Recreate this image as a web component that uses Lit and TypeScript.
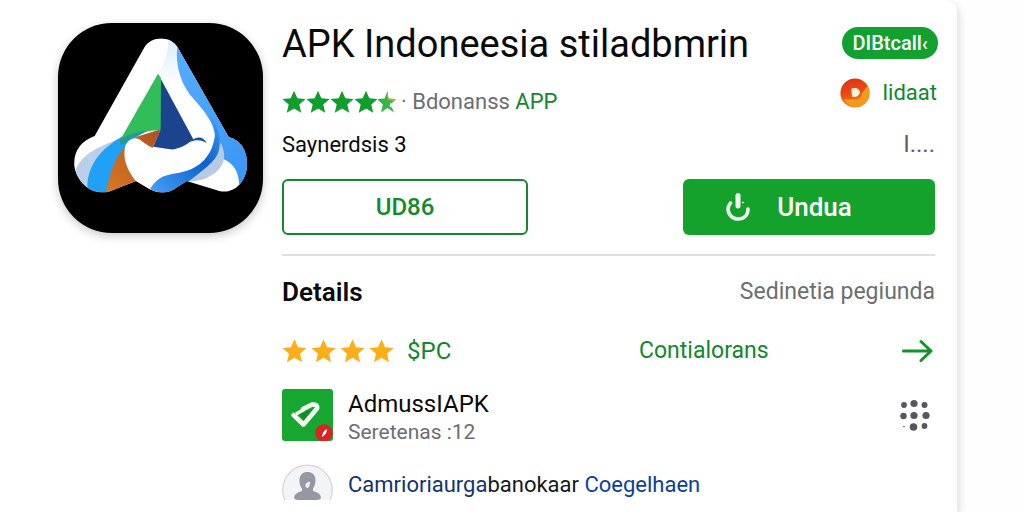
import { LitElement, html, css, svg } from "lit";
import { customElement } from "lit/decorators.js";

const STAR = "M12 1.2l3.2 7.3 7.9.7-6 5.3 1.8 7.8-6.9-4.1-6.9 4.1 1.8-7.8-6-5.3 7.9-.7z";

@customElement("app-logo")
class AppLogo extends LitElement {
  static styles = css`
    :host { display: block; }
    .tile {
      display: block;
      width: 205px;
      height: 210px;
      border-radius: 54px;
      background: #000;
      box-shadow: 0 3px 10px rgba(0, 0, 0, 0.22);
    }
  `;
  render() {
    return html`<svg class="tile" viewBox="55 67 613 630" role="img" aria-label="App logo">
      <defs>
        <linearGradient id="edge" x1="0" y1="0" x2="0.6" y2="1">
          <stop offset="0" stop-color="#58adff" /><stop offset="1" stop-color="#3b97f5" />
        </linearGradient>
        <linearGradient id="wave" x1="0" y1="1" x2="1" y2="0">
          <stop offset="0" stop-color="#4aa2fa" /><stop offset="0.6" stop-color="#0b62cc" /><stop offset="1" stop-color="#3f9af6" />
        </linearGradient>
        <linearGradient id="rust" x1="0" y1="1" x2="1" y2="0">
          <stop offset="0" stop-color="#d97a25" /><stop offset="1" stop-color="#b2501f" />
        </linearGradient>
        <linearGradient id="fold" x1="0" y1="0" x2="0" y2="1">
          <stop offset="0" stop-color="#dcebfa" /><stop offset="1" stop-color="#fff" />
        </linearGradient>
        <clipPath id="body">
          <path d="M312 142C334 104 392 104 414 142L566 409C606 418 624 458 621 498C616 548 580 580 538 571L440 541L398 568Q366 584 330 566L288 541L206 573C158 584 112 550 103 496C100 452 122 422 164 406Z" />
        </clipPath>
      </defs>
      <g clip-path="url(#body)">
        <rect x="95" y="105" width="535" height="480" fill="#fff" />
        <path d="M384 112C388 180 356 200 358 222L420 260C416 210 400 170 412 130Z" fill="url(#fold)" />
        <path d="M412 134C404 190 422 246 450 282C496 334 534 376 524 432L548 474C586 490 604 520 596 590H640V380L420 120Z" fill="url(#edge)" />
        <path d="M104 520C120 452 190 436 250 408L232 450L140 560Z" fill="#b9cfea" />
        <path d="M142 560C142 490 188 440 246 408L292 404C250 440 214 510 204 585H150Z" fill="#20a1f5" />
        <path d="M196 590C206 520 226 450 290 408L362 386L340 438L300 545Z" fill="url(#rust)" />
        <path d="M354 219L363 232V388Q304 390 244 412Z" fill="#31bd59" />
        <path d="M240 414Q284 390 326 390Q290 404 264 428L240 432Z" fill="#239c97" />
        <path d="M363 236L460 416L420 450L340 438L362 386Z" fill="#1c438e" />
        <path d="M538 420C556 448 556 476 544 496C522 530 480 542 448 542L440 520Z" fill="#b7c9e4" />
        <path d="M254 446C258 416 284 404 304 420C354 462 410 454 456 420L484 412L528 424C530 470 500 508 440 528L330 590L288 542C262 508 250 480 254 446Z" fill="#fff" />
        <path d="M328 572C346 530 380 522 410 518C474 508 514 472 524 410C528 388 520 366 508 344C544 390 548 440 526 472C498 510 450 530 404 584H330Z" fill="url(#wave)" />
      </g>
      <path d="M456 418C472 406 492 408 500 428C486 418 470 416 450 424Z" fill="#14509c" />
    </svg>`;
  }
}

@customElement("star-rating")
class StarRating extends LitElement {
  static properties = {
    full: { type: Number },
    half: { type: Boolean },
    gold: { type: Boolean },
  };
  declare full: number;
  declare half: boolean;
  declare gold: boolean;
  static styles = css`
    :host { display: block; }
    .stars { display: flex; color: #0f9d2c; }
    .gold { gap: 4px; color: #fbae17; }
    .star { display: block; width: 24px; height: 24px; }
    .gold .star { width: 25px; height: 26px; }
    .part { display: block; width: 18px; height: 24px; }
  `;
  render() {
    return html`<div class="stars ${this.gold ? "gold" : ""}" role="img" aria-label="Rating">
      ${Array.from({ length: this.full }, () => html`<svg class="star" viewBox="0.5 1 23 22"><path d=${STAR} fill="currentColor" /></svg>`)}
      ${this.half
        ? html`<svg class="part" viewBox="1 0 18 24">
            <path d="M10.5 1L11.5 8.5 19 9.2 13.6 14.2 17 22.6 10.5 18 4 22.4 5.8 14.4 0 9 7.5 8.5Z" fill="#35b548" />
            <path d="M10.5 1L11.3 8.5 19 9.2 15 12.6 16 10.6 11 10.3 9.8 4Z" fill="#dc9a3c" />
            <path d="M14 12L12.5 16 14.5 18Z" fill="#fff" />
          </svg>`
        : ""}
    </div>`;
  }
}

@customElement("app-root")
class AppRoot extends LitElement {
  static styles = css`
    :host {
      display: block;
      box-sizing: border-box;
      min-height: 100vh;
      padding-right: 67px;
      overflow: hidden;
      background: #fefefe;
      color: #0b0b0c;
      font-family: Roboto, "Liberation Sans", sans-serif;
      font-size: 22px;
      line-height: 28px;
    }
    .card {
      display: flex;
      align-items: flex-start;
      gap: 19px;
      box-sizing: border-box;
      min-height: 100vh;
      padding: 21px 22px 0 58px;
      border-radius: 0 12px 0 0;
      background: #fff;
      box-shadow: 2px 4px 10px rgba(0, 0, 0, 0.14);
    }
    .logo { flex: none; padding-top: 2px; }
    .main { flex: 1; min-width: 0; }
    .head { display: flex; justify-content: space-between; }
    .info { display: flex; flex-direction: column; }
    h1 { margin: 0; font-size: 38px; line-height: 46px; font-weight: 400; white-space: nowrap; }
    .rating { display: flex; align-items: center; gap: 5px; margin-top: 21px; color: #6c6e70; }
    p { margin: 0; }
    .by { margin-top: 15px; }
    .green { color: #12872c; }
    .side { display: flex; flex-direction: column; align-items: flex-end; padding-top: 6px; }
    .pill {
      box-sizing: border-box;
      height: 32px;
      margin-right: -3px;
      padding: 0 10px;
      border: 0;
      border-radius: 16px;
      background: #12a02f;
      color: #fff;
      font: 500 20px/32px Roboto, sans-serif;
    }
    .tag { display: flex; align-items: center; gap: 12px; margin: 19px -2px 0 0; color: #12872c; text-decoration: none; }
    .disc { display: block; width: 30px; height: 30px; }
    .more { margin-top: 22px; color: #5f6163; font-size: 24px; }
    .actions { display: flex; justify-content: space-between; margin-top: 20px; }
    .btn {
      display: flex;
      align-items: center;
      justify-content: center;
      box-sizing: border-box;
      height: 56px;
      border-radius: 6px;
      font: 500 26px/28px Roboto, sans-serif;
    }
    .line { flex: 0 1 246px; border: 2px solid #16872f; background: #fff; color: #148a2e; font-size: 24px; }
    .fill { flex: 0 1 252px; gap: 27px; padding: 0 40px 0 0; border: 0; background: #14a22d; color: #fff; }
    .power { display: block; width: 24px; height: 30px; }
    .details { margin-top: 19px; border-top: 2px solid #e0e1e1; padding-top: 20px; }
    .row { display: flex; align-items: center; justify-content: space-between; }
    h2 { margin: 0; font-size: 26px; line-height: 32px; font-weight: 600; }
    .soft { color: #6c6e70; }
    .mid { font-size: 23px; }
    .large { font-size: 24px; }
    .small { font-size: 21px; }
    .score { display: grid; grid-template-columns: 357px 1fr auto; align-items: center; margin-top: 29px; padding-right: 2px; }
    .stars { display: flex; align-items: center; gap: 13px; }
    a { color: #12872c; text-decoration: none; }
    .arrow { display: block; width: 32px; height: 24px; }
    .item { display: flex; align-items: center; gap: 15px; margin-top: 18px; }
    .thumb { display: block; flex: none; width: 51px; height: 52px; }
    .text { flex: 1; padding-top: 7px; }
    .dots { display: block; width: 32px; height: 34px; margin-right: 3px; }
    .person { align-items: flex-start; height: 36px; overflow: hidden; }
    .blue { color: #0b3f9c; }
    .navy { color: #12346f; }
    .ink { color: #16181b; }
  `;

  render() {
    const dots = [
      [4, 7, 2.9], [14, 5.5, 3.6], [24.5, 7, 3],
      [3.5, 18, 3.2], [14, 17.5, 3.6], [26, 17.5, 3.6],
      [4, 28.5, 0.8], [13.5, 29, 3.8], [24.5, 28, 2.9],
    ];
    return html`
      <main class="card">
        <app-logo class="logo"></app-logo>
        <div class="main">
          <header class="head">
            <div class="info">
              <h1>APK Indoneesia stiladbmrin</h1>
              <div class="rating">
                <star-rating full="4" half></star-rating>
                <span>· Bdonanss <span class="green">APP</span></span>
              </div>
              <p class="by">Saynerdsis 3</p>
            </div>
            <div class="side">
              <button class="pill">DIBtcall‹</button>
              <a class="tag" href="#">
                <svg class="disc" viewBox="0 0 30 30">
                  <defs><linearGradient id="sun" x1="0" y1="0" x2="0.3" y2="1">
                    <stop offset="0" stop-color="#d8301a" /><stop offset=".55" stop-color="#ea4a10" /><stop offset="1" stop-color="#f5891a" />
                  </linearGradient></defs>
                  <circle cx="15" cy="15" r="14.6" fill="url(#sun)" />
                  <path d="M3.500 21.500H17Q21.500 21 22 15L27.500 8Q32 17 25 25Q14 34 3.500 21.500Z" fill="#f59a1c" />
                  <path d="M11.500 10.500Q19 8.500 20 14.500Q18.500 19.500 12.500 19Q11 15 11.500 10.500Z" fill="#fff1dc" />
                </svg>
                <span>Iidaat</span>
              </a>
              <span class="more">I....</span>
            </div>
          </header>
          <div class="actions">
            <button class="btn line">UD86</button>
            <button class="btn fill">
              <svg class="power" viewBox="0 0 24 30" fill="none" stroke="#effff0" stroke-linecap="round">
                <path d="M12 3.500V14" stroke-width="5" />
                <path d="M4.500 11C-1 18 4 27 12 27C18 27 22 23 22 17" stroke-width="3.600" />
                <circle cx="17" cy="10.500" r=".6" stroke-width="1" />
              </svg>
              <span>Undua</span>
            </button>
          </div>
          <section class="details">
            <div class="row">
              <h2>Details</h2>
              <span class="soft mid">Sedinetia pegiunda</span>
            </div>
            <div class="score">
              <div class="stars">
                <star-rating full="4" gold></star-rating>
                <span class="green large">$PC</span>
              </div>
              <a class="mid" href="#">Contialorans</a>
              <svg class="arrow" viewBox="0 0 32 24" fill="none" stroke="#0f9427" stroke-width="3" stroke-linecap="round" stroke-linejoin="round">
                <path d="M2.500 12H30M20 2.500L30 12L20 21.500" />
              </svg>
            </div>
            <div class="item">
              <svg class="thumb" viewBox="0 0 51 52">
                <rect width="51" height="52" rx="3" fill="#17a62f" />
                <path d="M11.500 26L21.500 35.500L35 19.500Q36 15 30 15.500L21 20" fill="none" stroke="#f3fff3" stroke-width="4.600" stroke-linecap="round" stroke-linejoin="round" />
                <path d="M17 25L31 20L22 31Z" fill="#128a26" /><path d="M14 25L22 20.500" stroke="#f3fff3" stroke-width="3.500" />
                <circle cx="42" cy="44" r="8.800" fill="#dc2323" />
                <path d="M40.500 47.500Q41 42 44.500 40.500Q44.500 45 40.500 47.500Z" fill="#fff" stroke="#fff" />
              </svg>
              <div class="text">
                <p class="large">AdmussIAPK</p>
                <p class="soft small">Seretenas :12</p>
              </div>
              <svg class="dots" viewBox="0 0 32 34" fill="#55575a">
                ${dots.map(([x, y, r]) => svg`<circle cx=${x} cy=${y} r=${r} />`)}
              </svg>
            </div>
            <div class="item person">
              <svg class="thumb" viewBox="0 0 51 52">
                <circle cx="25.500" cy="26" r="24.800" fill="#f3f4f6" stroke="#d3d5d8" stroke-width="1.200" />
                <path d="M25.500 8C16 8 16 19 20 24.500V27Q12 29 12 34Q13 36 16 36H35Q38 36 39 34Q39 29 31 27V24.500C35 19 35 8 25.500 8Z" fill="#9598a3" />
                <path d="M23.500 20L26 18L28 17.500Q28 24 25.500 24Q23 24 23.500 20Z" fill="#eceef1" />
              </svg>
              <p class="text"><span class="navy">Camrioriaurga</span><span class="ink">banokaar</span> <a class="blue" href="#">Coegelhaen</a></p>
            </div>
          </section>
        </div>
      </main>
    `;
  }
}
